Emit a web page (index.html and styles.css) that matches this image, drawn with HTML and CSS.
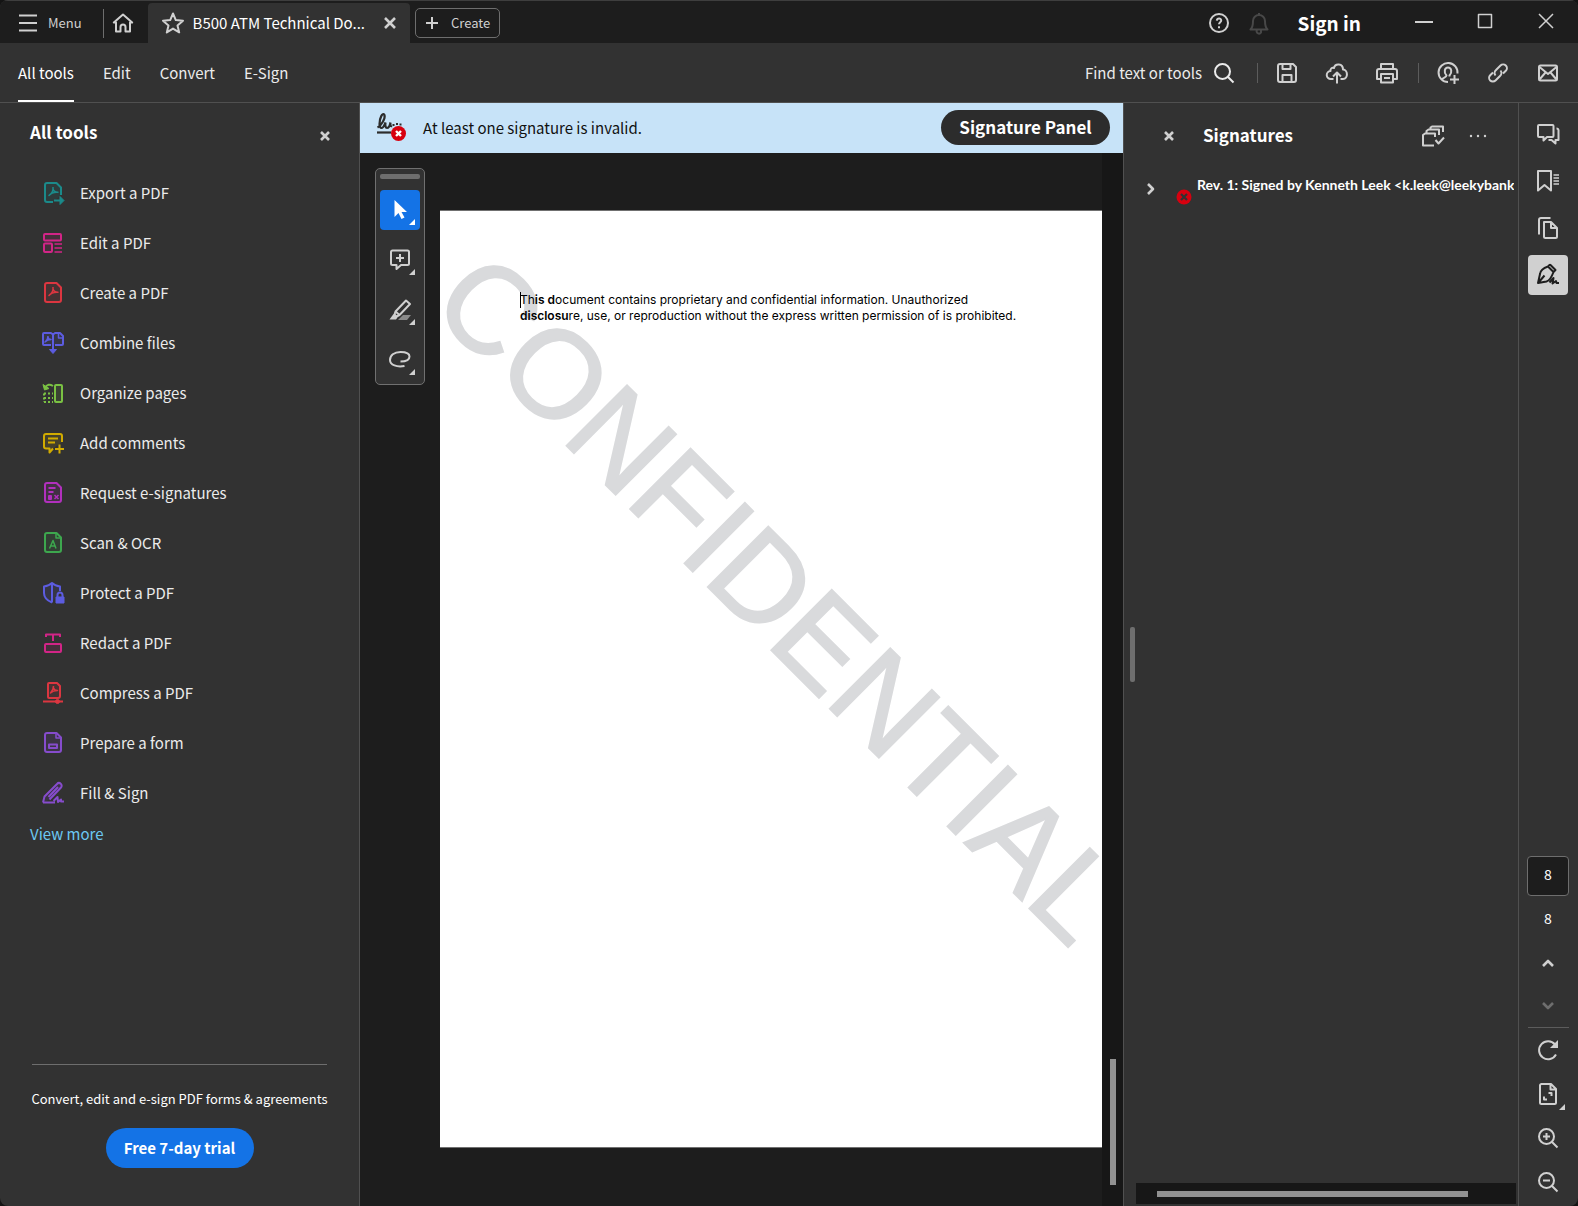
FILE: index.html
```html
<!DOCTYPE html>
<html lang="en">
<head>
<meta charset="utf-8">
<title>B500 ATM Technical Document</title>
<link rel="stylesheet" href="styles.css">
</head>
<body>
<div class="app">
  <header class="titlebar">
    <button class="menu-btn"><svg class="icon" viewBox="0 0 24 24"><path d="M3 4.500h18M3 12h18M3 19.500h18"/></svg><span>Menu</span></button>
    <span class="title-sep"></span>
    <button class="home-btn" aria-label="Home"><svg class="icon" viewBox="0 0 24 24"><path d="M5 11.500 2.800 11.500 12 3.500l9.200 8H19V20.500h-4.500V16a2.500 2.500 0 0 0-5 0v4.500H5z"/></svg></button>
    <div class="tab">
      <svg class="icon" viewBox="0 0 24 24"><path d="m12 2.500 2.800 6.600 7.200.6-5.500 4.700 1.700 7L12 17.600l-6.200 3.800 1.700-7L2 9.700l7.200-.6z"/></svg>
      <span class="tab-name">B500 ATM Technical Do...</span>
      <button aria-label="Close tab"><svg class="icon small" viewBox="0 0 16 16"><path class="heavy" d="m3 3 10 10M13 3 3 13"/></svg></button>
    </div>
    <button class="create-btn"><svg class="icon small" viewBox="0 0 16 16"><path d="M8 2v12M2 8h12"/></svg><span>Create</span></button>
    <div class="title-right">
      <button aria-label="Help"><svg class="icon" viewBox="0 0 24 24"><circle cx="12" cy="12" r="9"/><path d="M9.800 9.600c.3-2.800 4.400-2.700 4.400-.2 0 1.800-2.200 1.800-2.200 3.900M12 15.200v2"/></svg></button>
      <button class="bell" aria-label="Notifications"><svg class="icon" viewBox="0 0 24 24"><path d="M3.500 18.500h17c-2.500-2.500-2.500-5-2.500-8.500a6 6 0 0 0-12 0c0 3.500 0 6-2.500 8.500zM10 19a2 2 0 0 0 4 2.500V19M11 3h2"/></svg></button>
      <button class="signin">Sign in</button>
      <div class="window-buttons">
        <button aria-label="Minimize"><svg class="icon" viewBox="0 0 24 24"><path d="M3 13h18"/></svg></button>
        <button aria-label="Maximize"><svg class="icon thin" viewBox="0 0 24 24"><path d="M5.500 5.500h13v13h-13z"/></svg></button>
        <button aria-label="Close"><svg class="icon thin" viewBox="0 0 24 24"><path d="m5 5 14 14M19 5 5 19"/></svg></button>
      </div>
    </div>
  </header>

  <div class="toolbar">
    <nav class="modes">
      <a class="active" href="#tools">All tools</a>
      <a href="#edit">Edit</a>
      <a href="#convert">Convert</a>
      <a href="#esign">E-Sign</a>
    </nav>
    <div class="actions">
      <button class="find"><span>Find text or tools</span><svg class="icon" viewBox="0 0 24 24"><circle cx="10.500" cy="10.500" r="7.500"/><path d="m16 16 5.500 5.500"/></svg></button>
      <span class="sep"></span>
      <div class="action-group">
        <button aria-label="Save"><svg class="icon" viewBox="0 0 24 24"><path d="M3 5a2 2 0 0 1 2-2h13l3 3v13a2 2 0 0 1-2 2H5a2 2 0 0 1-2-2zM7.500 3v5h8V3M7.500 21v-7h9v7"/></svg></button>
        <button aria-label="Upload"><svg class="icon" viewBox="0 0 24 24"><path d="M8.500 18H6a4 4 0 0 1-.5-8C5 8 7 6 9 7c1-5 9-5 9 1.500 5 0 5.500 9.500 0 9.500h-2.500M12 22.500v-11M8 15.500l4-4 4 4"/></svg></button>
        <button aria-label="Print"><svg class="icon" viewBox="0 0 24 24"><path d="M6 8V3h12v5M6 18H2V10a2 2 0 0 1 2-2h16a2 2 0 0 1 2 2v8h-4M6 13h12v8.500H6zM9 17h6"/></svg></button>
      </div>
      <span class="sep"></span>
      <div class="action-group">
        <button aria-label="Share with people"><svg class="icon" viewBox="0 0 24 24"><path d="M12 21a9.500 9.500 0 1 1 9.500-8.500M6 18.500c.5-2 4.500-2 4.500-4-3-3-2-8 1.500-8s4.500 5 1.500 8v1M18.500 14v9M14 18.500h9"/></svg></button>
        <button aria-label="Copy link"><svg class="icon" viewBox="0 0 24 24"><path d="M9.500 14.500a4 4 0 0 1 .5-5.500l4.500-4.500a3.700 3.700 0 0 1 5.300 5.300L17 12.500M14.500 9.500A4 4 0 0 1 14 15l-4.500 4.500a3.700 3.700 0 0 1-5.300-5.300L7 11.500"/></svg></button>
        <button aria-label="Send by mail"><svg class="icon" viewBox="0 0 24 24"><rect x="3" y="4.500" width="18" height="15" rx="1.500"/><path d="m3.500 6 8.500 7 8.500-7M3.500 18.500l6-7M20.500 18.500l-6-7"/></svg></button>
      </div>
    </div>
  </div>

  <div class="workspace">
    <aside class="tools" id="tools">
      <div class="tools-head">
        <h2>All tools</h2>
        <button aria-label="Close tools"><svg class="icon small" viewBox="0 0 16 16"><path class="heavy" d="m4 4 8 8M12 4l-8 8"/></svg></button>
      </div>
      <ul class="tool-list">
        <li><a href="#export"><svg class="icon teal" viewBox="0 0 24 24"><path class="tint" d="M12 21H6a2 2 0 0 1-2-2V4a2 2 0 0 1 2-2h9.500L20 6.500V14"/><path class="fine" d="M12 6v2c0 3-2 5-4 6.500 2-2.500 5-3.500 9-3.200-3 0-4.500-1.500-5-3.300"/><path d="M13 19.500h7"/><path class="solid" d="m19 15.500 4 4-4 4z"/></svg>Export a PDF</a></li>
        <li><a href="#edit"><svg class="icon magenta" viewBox="0 0 24 24"><rect class="tint" x="3" y="3" width="17" height="6.500" rx="1"/><rect class="tint" x="3" y="12.500" width="8" height="8.500" rx="1"/><path class="fine" d="M13.500 13h7.500M13.500 17h7.500M13.500 21h7.500"/></svg>Edit a PDF</a></li>
        <li><a href="#create"><svg class="icon red" viewBox="0 0 24 24"><path class="tint" d="M6 2h9.500L20 6.500V19a2 2 0 0 1-2 2H6a2 2 0 0 1-2-2V4a2 2 0 0 1 2-2z"/><path class="fine" d="M12 6v2c0 3-2 5-4 6.500 2-2.500 5-3.500 9-3.200-3 0-4.500-1.500-5-3.300"/></svg>Create a PDF</a></li>
        <li><a href="#combine"><svg class="icon indigo" viewBox="0 0 24 24"><path class="tint" d="M10 14H3a1 1 0 0 1-1-1V3a1 1 0 0 1 1-1h7l2 1.500L14 2h5l3 3v8a1 1 0 0 1-1 1h-7"/><path class="fine" d="M7 5c0 3-1.500 5-3 6 2-2 4-2.500 6-2.500-2 0-3-1-3-2.500M17.500 3v4H21"/><path d="M12 4v17"/><path class="solid" d="M8.500 18.500h7L12 22.500z"/></svg>Combine files</a></li>
        <li><a href="#organize"><svg class="icon green" viewBox="0 0 24 24"><rect class="tint" x="14" y="4" width="7" height="17" rx="1"/><path d="M4 7c2-4 5-4 8-2"/><path class="solid" d="M2 3.500 3.500 9 8 7.500z"/><path class="dots" d="M3 12.500h9M3 21h9M3 12.500V21"/><path class="dots" d="M3 17h9"/></svg>Organize pages</a></li>
        <li><a href="#comments"><svg class="icon yellow" viewBox="0 0 24 24"><path class="tint" d="M12 17.500 8.500 21.500v-4H5a2 2 0 0 1-2-2V5a2 2 0 0 1 2-2h14a2 2 0 0 1 2 2v6"/><path d="M7 7.500h10M7 11.500h7M18.500 13.500v9M14 18h9"/></svg>Add comments</a></li>
        <li><a href="#request"><svg class="icon purple" viewBox="0 0 24 24"><path class="tint" d="M6 2h9.500L20 6.500V19a2 2 0 0 1-2 2H6a2 2 0 0 1-2-2V4a2 2 0 0 1 2-2z"/><path d="M7.500 7h7M7.500 11h5M8 15h2v3H8z"/><path class="fine" d="m13.500 14 4 4M17.500 14l-4 4"/></svg>Request e-signatures</a></li>
        <li><a href="#scan"><svg class="icon leaf" viewBox="0 0 24 24"><path class="tint" d="M6 2h9.500L20 6.500V19a2 2 0 0 1-2 2H6a2 2 0 0 1-2-2V4a2 2 0 0 1 2-2z"/><path class="fine" d="M15 2.500V7h4.500M8.500 17.500 12 9.500l3 8M9.500 15h5"/></svg>Scan &amp; OCR</a></li>
        <li><a href="#protect"><svg class="icon indigo" viewBox="0 0 24 24"><path class="tint" d="M11 21.500C6 19.500 3 16 3 12V5.500c3-.5 6-1.500 8-3.500 2 2 5 3 8 3.500V10"/><path d="M11 3v18.500M16.500 16v-2a2.500 2.500 0 0 1 5 0v2"/><path class="solid" d="M15 16h8v6h-8z"/></svg>Protect a PDF</a></li>
        <li><a href="#redact"><svg class="icon magenta" viewBox="0 0 24 24"><path d="M5 6V3.500h14V6M12 3.500V10"/><rect class="tint" x="4" y="13" width="16" height="8" rx="1"/></svg>Redact a PDF</a></li>
        <li><a href="#compress"><svg class="icon red" viewBox="0 0 24 24"><path class="tint" d="M8 2h8l3 3v10a2 2 0 0 1-2 2H8a1 1 0 0 1-1-1V3a1 1 0 0 1 1-1z"/><path class="fine" d="M12.500 5c0 3-1 5-3 7 2-2 4-2.500 7-2.500-2 0-3.500-.5-4-2.500"/><path d="M2 20.500h20"/><circle class="solid" cx="16.500" cy="20.500" r="2"/></svg>Compress a PDF</a></li>
        <li><a href="#form"><svg class="icon violet" viewBox="0 0 24 24"><path class="tint" d="M6 2h9.500L20 6.500V19a2 2 0 0 1-2 2H6a2 2 0 0 1-2-2V4a2 2 0 0 1 2-2z"/><path class="fine" d="M15 2.500V7h4.500"/><path d="M8 13.500h8v3.500H8z"/></svg>Prepare a form</a></li>
        <li><a href="#fill"><svg class="icon violet" viewBox="0 0 24 24"><path class="tint" d="M2 21.500l1.500-6L16 3a2.500 2.500 0 0 1 4 3.500L8.500 18.500"/><path d="M7.500 16 17 6M2 21.500h12M12.500 20l4-4 .5 5 3-2.500v2H23"/></svg>Fill &amp; Sign</a></li>
      </ul>
      <a class="view-more" href="#more">View more</a>
      <div class="promo">
        <p>Convert, edit and e-sign PDF forms &amp; agreements</p>
        <button>Free 7-day trial</button>
      </div>
    </aside>

    <main class="viewer">
      <div class="banner">
        <svg class="sig" viewBox="0 0 32 32"><path d="M2.500 16.500c4-2 8-9 7-12.500-2-3-5 3-5 9 0 3 .8 4 2 4 2 0 3.300-4 4-5.500-.5 3 0 5.500 1.500 5.500s3-3 3.500-5.500c-.5 3 .2 4 1.500 3.500"/><path d="M17.500 14h2M21 13h2M24.500 13.500h2"/><path d="M2 21.500h14"/><circle cx="23.500" cy="22.500" r="7.500"/><path class="cross" d="m21 20 5 5M26 20l-5 5"/></svg>
        <p>At least one signature is invalid.</p>
        <button>Signature Panel</button>
      </div>
      <div class="canvas">
        <div class="palette">
          <span class="grip"></span>
          <button class="active" aria-label="Select"><svg class="icon" viewBox="0 0 24 24"><path class="solid plain" d="M6.500 2v17l4-4 3 6 3-1.500-3-5.500H19z"/></svg></button>
          <button aria-label="Comment"><svg class="icon" viewBox="0 0 24 24"><path d="M4.500 2.500h15A1.500 1.500 0 0 1 21 4v11.500a1.500 1.500 0 0 1-1.500 1.500H13l-4.500 4v-4h-4A1.500 1.500 0 0 1 3 15.500V4a1.500 1.500 0 0 1 1.500-1.500zM12 6v8M8 10h8"/></svg></button>
          <button aria-label="Highlight"><svg class="icon" viewBox="0 0 24 24"><path class="shade" d="M10 22l5-5h8l-4 5z"/><path d="M7.500 13.500 18 2.500l4 3.500L11.500 17zM7.500 13.500l-1 3 2 2 3-1.500"/><path class="solid plain" d="m1.500 21.500 4-5.500 4 3.500-1.500 2z"/></svg></button>
          <button aria-label="Draw"><svg class="icon" viewBox="0 0 24 24"><path d="M12.500 13.500c5 0 9-1.500 9-5C21.500 5 17 4 12.500 4 6 4 2 7.500 2 12c0 5 7 7.500 14.500 6"/></svg></button>
        </div>
        <article class="page">
          <p>Th<b>is d</b>ocument contains proprietary and confidential information. Unauthorized<br><b>disclosu</b>re, use, or reproduction without the express written permission of is prohibited.</p>
          <span class="watermark">CONFIDENTIAL</span>
        </article>
        <div class="vscroll"><span></span></div>
      </div>
    </main>

    <aside class="signatures">
      <span class="resizer"></span>
      <div class="sig-head">
        <button aria-label="Close signatures"><svg class="icon small" viewBox="0 0 16 16"><path class="heavy" d="m4 4 8 8M12 4l-8 8"/></svg></button>
        <h2>Signatures</h2>
        <button aria-label="Validate all"><svg class="icon" viewBox="0 0 24 24"><path d="M13 21.500H2V11l2-1.500h10V13M5.500 9.500V7l2-1.500H18V11M9.500 5V3.500l1.500-1h11V8M14.500 16l3 3.500 5.500-6"/></svg></button>
        <button aria-label="Options"><svg class="icon" viewBox="0 0 24 24"><path class="ellipsis" d="M5 12h.01M12 12h.01M19 12h.01"/></svg></button>
      </div>
      <div class="sig-row">
        <button aria-label="Expand"><svg class="icon small" viewBox="0 0 16 16"><path class="heavy" d="m5 3 5 5-5 5"/></svg></button>
        <svg class="invalid" viewBox="0 0 16 16"><circle cx="8" cy="8" r="7.500"/><path d="m5 5 6 6M11 5l-6 6"/></svg>
        <span class="sig-text">Rev. 1: Signed by Kenneth Leek &lt;k.leek@leekybank</span>
      </div>
      <div class="hscroll"><span></span></div>
    </aside>

    <nav class="rail">
      <div class="rail-top">
        <button aria-label="Comments"><svg class="icon" viewBox="0 0 24 24"><path d="M3 3h13.500a1 1 0 0 1 1 1v10a1 1 0 0 1-1 1H11l-3.500 3.500V15H3a1 1 0 0 1-1-1V4a1 1 0 0 1 1-1zM20.500 6.500a2 2 0 0 1 2 1.500v10h-3v3.500l-4-3.500h-3"/></svg></button>
        <button aria-label="Bookmarks"><svg class="icon" viewBox="0 0 24 24"><path d="M2 2h13v19.500L8.500 16 2 21.500z"/><path class="fine" d="M17.500 6H23M17.500 9H23M17.500 12H23M17.500 15H23"/></svg></button>
        <button aria-label="Pages"><svg class="icon" viewBox="0 0 24 24"><path d="M8 6h7l6 6v8.500a1.500 1.500 0 0 1-1.500 1.500H9.500A1.500 1.500 0 0 1 8 20.500zM15 6v6h6M3 18.500V4a2 2 0 0 1 2-2h9.500"/></svg></button>
        <button class="active" aria-label="Signatures"><svg class="icon" viewBox="0 0 24 24"><path d="m12 3.500 5.500 5.500M14 1.500 19.500 7l-2 2M14 1.500l-2 2C7.500 5 4.500 7 4 11L2 20l8.500-1.500c3.500-1 5-4 7-9.500M2.500 19.500l6-7M13.500 19.500l4-4.500-1 5.500 3.500-2.500.5 2H23"/></svg></button>
      </div>
      <div class="rail-bottom">
        <input type="text" value="8" aria-label="Page number">
        <span class="total">8</span>
        <button aria-label="Previous page"><svg class="icon" viewBox="0 0 24 24"><path class="heavy" d="m7 15 5-5 5 5"/></svg></button>
        <button class="disabled" aria-label="Next page"><svg class="icon" viewBox="0 0 24 24"><path class="heavy" d="m7 9 5 5 5-5"/></svg></button>
        <span class="rule"></span>
        <button aria-label="Rotate"><svg class="icon" viewBox="0 0 24 24"><path d="M20 16.500A9 9 0 1 1 19 6.500"/><path class="solid plain" d="M22 2v8h-8z"/></svg></button>
        <button class="corner" aria-label="Page display"><svg class="icon" viewBox="0 0 24 24"><path d="M5.500 2h9.500l5 5v13.500a1.500 1.500 0 0 1-1.500 1.500h-13A1.500 1.500 0 0 1 4 20.500v-17A1.500 1.500 0 0 1 5.500 2zM14.500 2.500V7.500h5M12.500 11h3v3M8 14.500v3h3"/></svg></button>
        <button aria-label="Zoom in"><svg class="icon" viewBox="0 0 24 24"><circle cx="10.500" cy="10.500" r="7.500"/><path d="m16 16 5.500 5.500M7 10.500h7M10.500 7v7"/></svg></button>
        <button aria-label="Zoom out"><svg class="icon" viewBox="0 0 24 24"><circle cx="10.500" cy="10.500" r="7.500"/><path d="m16 16 5.500 5.500M7 10.500h7"/></svg></button>
      </div>
    </nav>
  </div>
</div>
</body>
</html>
```
FILE: styles.css
```css
* { box-sizing: border-box; }

body {
  margin: 0;
  background: #141414;
  color: #ebebeb;
  font: 15px/20px "Noto Sans CJK SC", "Open Sans", sans-serif;
}

h2, p, ul { margin: 0; padding: 0; }
ul { list-style: none; }
a { color: inherit; text-decoration: none; }

button {
  display: flex;
  align-items: center;
  justify-content: center;
  flex: none;
  margin: 0;
  padding: 0;
  border: 0;
  background: none;
  color: #d0d0d0;
  font: inherit;
  white-space: nowrap;
}

.icon {
  display: block;
  flex: none;
  width: 24px;
  height: 24px;
  fill: none;
  stroke: currentColor;
  stroke-width: 2;
  stroke-linejoin: round;
}
.icon.small { width: 16px; height: 16px; }
.icon.thin { stroke-width: 1.5; }
.icon .heavy { stroke-width: 2.6; }
.icon .fine { stroke-width: 1.5; }
.icon .solid { fill: currentColor; stroke-width: 1; }
.icon .plain { stroke: none; }
.icon .tint { fill: currentColor; fill-opacity: 0.12; }
.icon .shade { fill: #8a8a8a; stroke: none; }
.icon .dots { stroke-dasharray: 2 2; }
.icon .ellipsis { stroke-linecap: round; stroke-width: 2.4; }

.app {
  display: flex;
  flex-direction: column;
  height: 100vh;
  overflow: hidden;
  border-radius: 8px;
  background: #323232;
}

/* Title bar */
.titlebar {
  display: flex;
  align-items: center;
  flex: none;
  height: 43px;
  padding-top: 2px;
  border-top: 1px solid #3e3e3e;
  background: #1d1d1d;
}
.menu-btn { gap: 8px; padding-left: 16px; font-size: 13px; }
.title-sep { width: 1px; height: 29px; margin-left: 21px; background: #6e6e6e; }
.home-btn { width: 38px; }
.tab {
  display: flex;
  align-items: center;
  align-self: stretch;
  width: 262px;
  margin-left: 6px;
  padding: 0 12px 0 13px;
  border-radius: 4px 4px 0 0;
  background: #323232;
  color: #d0d0d0;
}
.tab-name { flex: 1; margin-left: 8px; color: #fff; white-space: nowrap; }
.create-btn {
  gap: 11px;
  width: 85px;
  height: 30px;
  margin-left: 5px;
  border: 1px solid #6e6e6e;
  border-radius: 5px;
  font-size: 13px;
}
.title-right { display: flex; align-items: center; margin-left: auto; }
.bell { margin-left: 16px; }
.title-right .bell { color: #484848; }
.signin { margin-left: 27px; color: #fff; font-size: 19px; font-weight: 700; }
.window-buttons { display: flex; gap: 37px; margin: 0 20px 4px 51px; }

/* Mode tabs and document actions */
.toolbar {
  display: flex;
  align-items: center;
  justify-content: space-between;
  flex: none;
  height: 60px;
  padding: 0 18px;
  border-bottom: 1px solid #505050;
}
.modes { display: flex; gap: 29px; height: 100%; }
.modes a { line-height: 60px; }
.modes .active { border-bottom: 2px solid #fff; color: #fff; }
.actions { display: flex; align-items: center; }
.find { gap: 10px; color: #ebebeb; }
.sep { width: 1px; height: 20px; background: #5c5c5c; }
.find + .sep { margin-left: 21px; }
.action-group { display: flex; gap: 26px; padding: 0 19px 0 17px; }
.action-group:last-child { padding-right: 0; }

/* Columns */
.workspace {
  display: grid;
  grid-template-columns: 360px minmax(0, 1fr) 396px 59px;
  flex: 1;
  min-height: 0;
}

/* Tools panel */
.tools {
  display: flex;
  flex-direction: column;
  border-right: 1px solid #505050;
}
.tools-head {
  display: flex;
  align-items: center;
  justify-content: space-between;
  height: 65px;
  padding: 0 26px 0 30px;
}
h2 { margin-bottom: 2px; color: #fff; font-size: 17px; font-weight: 700; }
.tools-head h2 { margin-bottom: 8px; }
.tool-list a {
  display: flex;
  align-items: center;
  gap: 15px;
  height: 50px;
  padding-left: 41px;
}
.view-more { padding: 6px 30px; color: #6cc8f2; }
.teal { color: #1b8a8a; }
.magenta { color: #d22587; }
.red { color: #dc3640; }
.indigo { color: #5c5ce0; }
.green { color: #7ac143; }
.yellow { color: #d1ab00; }
.purple { color: #b130bd; }
.leaf { color: #3da74e; }
.violet { color: #864ccc; }
.promo {
  display: flex;
  flex-direction: column;
  align-items: center;
  gap: 19px;
  margin: auto 32px 38px;
  padding-top: 24px;
  border-top: 1px solid #6e6e6e;
  color: #fff;
  font-size: 13px;
  white-space: nowrap;
}
.promo button {
  width: 148px;
  height: 40px;
  border-radius: 20px;
  background: #1473e6;
  color: #fff;
  font-size: 15px;
  font-weight: 700;
}

/* Document viewer */
.viewer { display: flex; flex-direction: column; min-width: 0; }
.banner {
  display: flex;
  align-items: center;
  flex: none;
  height: 50px;
  padding: 0 13px 2px 15px;
  background: #c7e3f8;
  color: #111;
}
.sig { width: 32px; height: 32px; fill: none; stroke: #2c2c2c; stroke-width: 2.2; }
.sig circle { fill: #d7000f; stroke: none; }
.sig .cross { stroke: #fff; stroke-width: 2.4; }
.banner p { flex: 1; margin-left: 16px; padding-top: 2px; }
.banner button {
  width: 169px;
  height: 35px;
  border-radius: 18px;
  background: #2c2c2c;
  color: #fff;
  font-size: 17px;
  font-weight: 700;
}
.canvas {
  position: relative;
  display: flex;
  flex: 1;
  min-height: 0;
  background: #1d1d1d;
}
.palette {
  position: absolute;
  top: 15px;
  left: 15px;
  display: flex;
  flex-direction: column;
  align-items: center;
  gap: 10px;
  width: 50px;
  padding: 5px 0 4px;
  border: 1px solid #707070;
  border-radius: 5px;
  background: #323232;
}
.grip { width: 40px; height: 5px; margin-bottom: 1px; border-radius: 2px; background: #6e6e6e; }
.palette button { position: relative; width: 40px; height: 40px; border-radius: 4px; }
.palette .active { background: #1473e6; color: #fff; }
.palette button::after,
.corner::after {
  content: "";
  position: absolute;
  right: 5px;
  bottom: 5px;
  border-bottom: 6px solid currentColor;
  border-left: 6px solid transparent;
}
.page {
  position: relative;
  flex: 1;
  margin: 57px 0 58px 80px;
  padding: 81px 0 0 80px;
  border-top: 1px solid #707070;
  border-bottom: 1px solid #707070;
  background: #fff;
  color: #000;
  font: 12px/16px "Inter", sans-serif;
}
.page p { position: relative; z-index: 1; white-space: nowrap; }
.page b { font-weight: 600; }
/* text caret */
.page p::before {
  content: "";
  position: absolute;
  top: 0;
  left: 0;
  width: 1px;
  height: 16px;
  background: #000;
}
.watermark {
  position: absolute;
  top: 387px;
  left: 340px;
  color: #d9dadc;
  font: 124px/88px "Liberation Sans", Arial, sans-serif;
  -webkit-text-stroke: 2px #d9dadc;
  transform: translate(-50%, -50%) rotate(45deg);
}
.vscroll {
  position: relative;
  display: flex;
  align-items: flex-end;
  justify-content: center;
  width: 21px;
  padding-bottom: 21px;
  background: #171717;
}
.vscroll span { width: 6px; height: 126px; background: #919191; }

/* Signatures panel */
.signatures {
  position: relative;
  display: flex;
  flex-direction: column;
  min-width: 0;
  border-right: 1px solid #505050;
  border-left: 1px solid #505050;
}
.resizer {
  position: absolute;
  top: calc(50% - 28px);
  left: 6px;
  width: 5px;
  height: 55px;
  border-radius: 2px;
  background: #6e6e6e;
}
.sig-head {
  display: flex;
  align-items: center;
  height: 65px;
  padding: 0 28px 0 37px;
  gap: 21px;
}
.sig-head h2 { flex: 1; margin-left: 5px; }
.sig-row {
  display: flex;
  align-items: flex-start;
  height: 40px;
  padding: 7px 0 0 19px;
  color: #fff;
  font: 700 14px/20px "Lato", sans-serif;
}
.sig-row button { margin-top: 6px; }
.invalid { flex: none; width: 16px; height: 16px; margin: 14px 5px 0 17px; fill: #d7000f; stroke: #323232; stroke-width: 2.2; }
.invalid circle { stroke: none; }
.sig-text { overflow: hidden; white-space: nowrap; }
.hscroll {
  height: 21px;
  margin: auto 2px 2px 12px;
  padding: 8px 48px 7px 21px;
  background: #171717;
}
.hscroll span { display: block; height: 6px; background: #919191; }

/* Navigation rail */
.rail {
  display: flex;
  flex-direction: column;
  align-items: center;
  justify-content: space-between;
  padding-right: 1px;
}
.rail-top { display: flex; flex-direction: column; gap: 7px; padding-top: 11px; }
.rail-top button { width: 40px; height: 40px; border-radius: 4px; }
.rail-top .active { background: #d0d0d0; color: #1d1d1d; }
.rail-bottom {
  display: flex;
  flex-direction: column;
  align-items: center;
  padding-bottom: 2px;
  font-size: 14px;
}
.rail-bottom input {
  width: 42px;
  height: 40px;
  padding: 0 0 4px;
  border: 1px solid #6e6e6e;
  border-radius: 4px;
  background: #1d1d1d;
  color: #fff;
  font: inherit;
  text-align: center;
}
.rail-bottom button { position: relative; width: 40px; height: 44px; }
.total { margin: 12px 0 13px; color: #fff; }
.rail-bottom .disabled { height: 42px; color: #6e6e6e; }
.rule { width: 41px; height: 1px; background: #5c5c5c; }
.corner::after { right: 3px; bottom: 6px; }
```
